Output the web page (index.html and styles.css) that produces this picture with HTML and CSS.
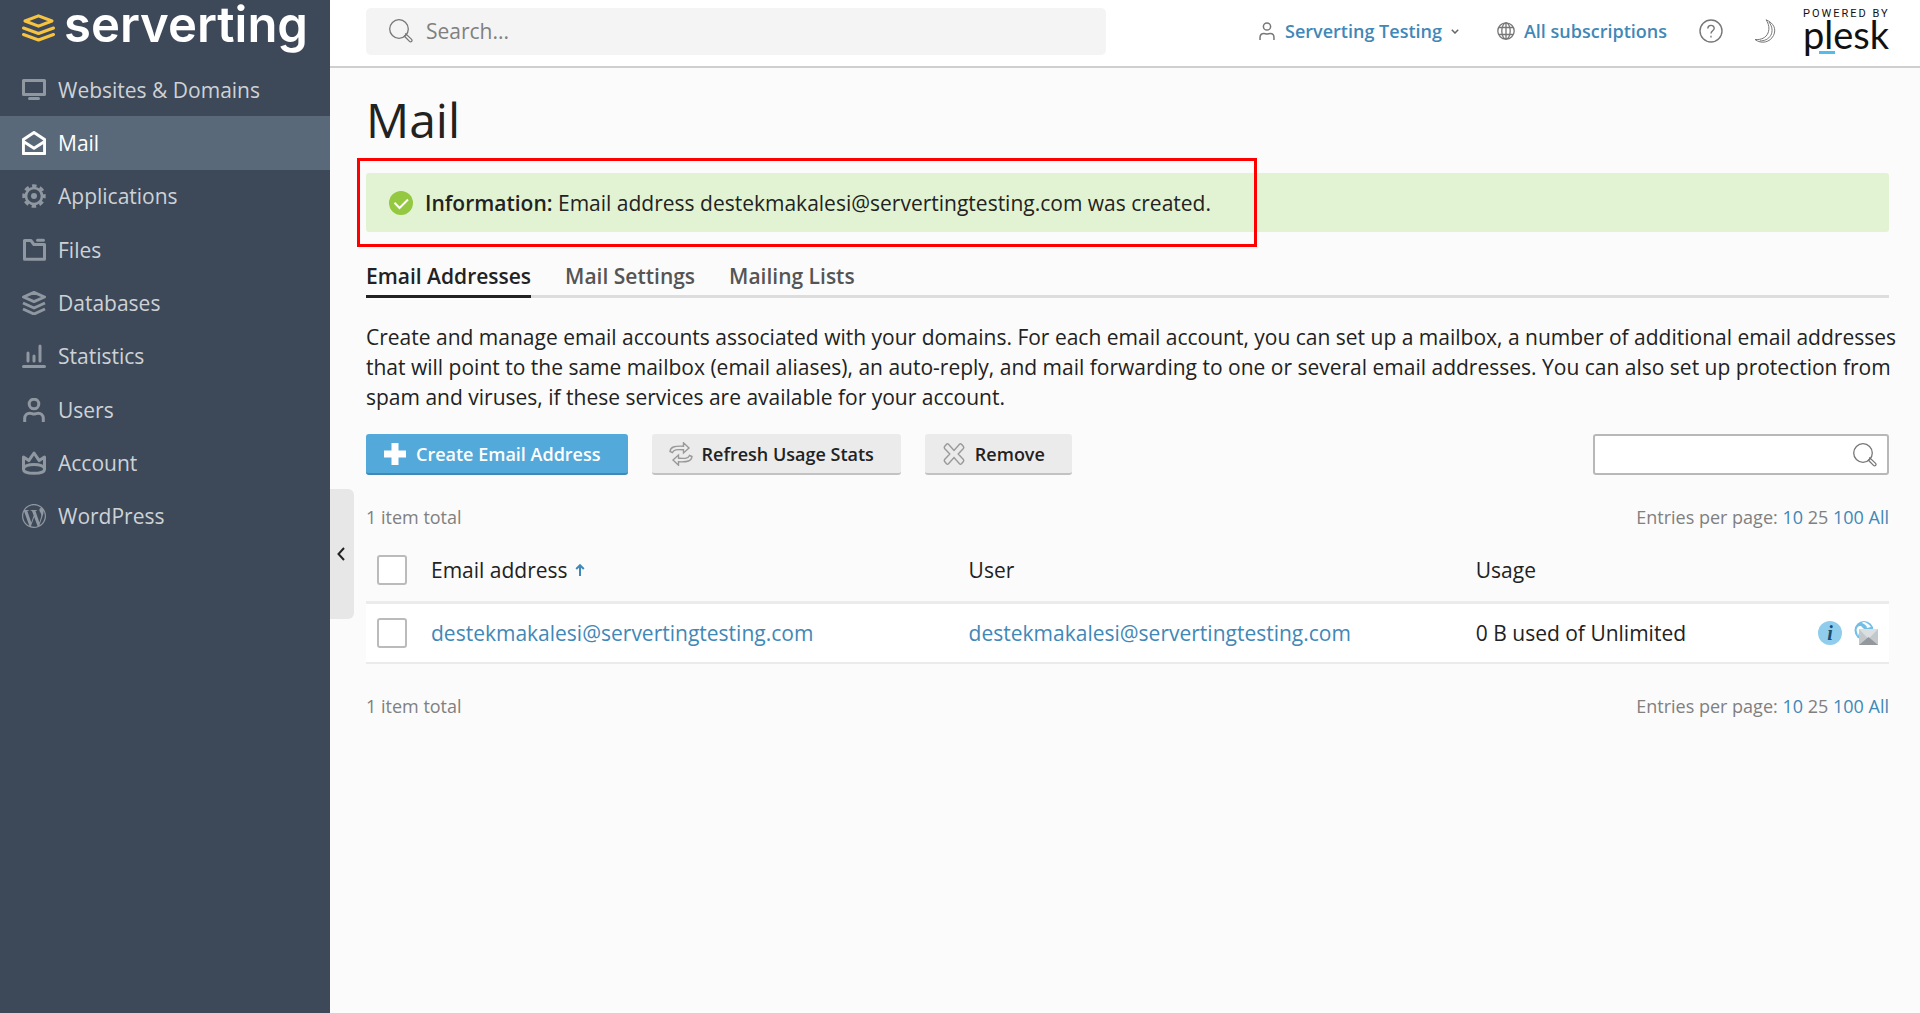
FILE: index.html
```html
<!DOCTYPE html>
<html lang="en">
<head>
<meta charset="utf-8">
<title>Mail</title>
<meta name="viewport" content="width=device-width, initial-scale=1">
<link rel="stylesheet" href="styles.css">
</head>
<body>
<svg class="sprite" aria-hidden="true">
  <symbol id="search" viewBox="0 0 24 24"><circle cx="10" cy="10" r="9.3"/><path d="M15.400 17.200l1.900-1.800 5.300 5a1.400 1.400 0 0 1 0 2 1.400 1.400 0 0 1-2.100 0zM17 15.300l-.8-.7"/></symbol>
  <symbol id="layers" viewBox="0 0 24 24"><path d="M1.500 6L12 1.400 22.500 6 12 10.600zM1 12l11 5 11-5M1 18l11 5 11-5"/></symbol>
  <symbol id="user" viewBox="0 0 24 24"><circle cx="12" cy="6" r="4.800"/><path d="M2.700 24v-3.500c0-3.500 2.400-5.300 5-5.300 1.800 0 2.600.9 4.300.9s2.500-.9 4.300-.9c2.600 0 5 1.800 5 5.300V24"/></symbol>
</svg>
<div class="layout">
  <aside class="sidebar">
    <a class="brand" href="#">
      <svg class="brand-mark" viewBox="0 0 33 28"><path d="M3 7L16.500 1.800 30 7l-13.500 5.200zM1.500 14l15 5.500 15-5.500M1.500 20.500l15 5.500 15-5.500"/></svg>
      <span>serverting</span>
    </a>
    <nav>
      <ul class="menu">
        <li><a href="#"><svg class="icon" viewBox="0 0 24 24"><path d="M1.500 2.500h21v14h-21zM7.500 20.500h9" stroke-linecap="round"/></svg>Websites &amp; Domains</a></li>
        <li><a class="active" href="#" aria-current="page"><svg class="icon" viewBox="0 0 24 24"><path d="M1.400 22.600V8.500L12 1.500l10.600 7v14.100zM1.400 10.500L12 17.200l10.600-6.700"/></svg>Mail</a></li>
        <li><a href="#"><svg class="icon" viewBox="0 0 24 24"><circle cx="12" cy="12" r="8" stroke-width="2.600"/><circle cx="12" cy="12" r="10.200" stroke-width="3" stroke-dasharray="4.500 3.510" stroke-dashoffset="2.250"/><circle class="solid" cx="12" cy="12" r="3"/></svg>Applications</a></li>
        <li><a href="#"><svg class="icon" viewBox="0 0 24 24"><path d="M2.500 2.500h6.400l3 4h10.600v14.800h-20zM15.500 2.200h6" stroke-linecap="round"/></svg>Files</a></li>
        <li><a href="#"><svg class="icon"><use href="#layers"/></svg>Databases</a></li>
        <li><a href="#"><svg class="icon" viewBox="0 0 24 24"><path d="M1.500 22.500h21M6 9v8M12 12v5M18 2v15" stroke-linecap="round"/></svg>Statistics</a></li>
        <li><a href="#"><svg class="icon"><use href="#user"/></svg>Users</a></li>
        <li><a href="#"><svg class="icon" viewBox="0 0 24 24"><path d="M1.500 18.500V6l5.300 3.600L12 2l5.200 7.600L22.500 6v12.500c0 5-21 5-21 0z"/><path d="M1.800 17c2-4.800 18.400-4.800 20.400 0"/></svg>Account</a></li>
        <li><a href="#"><svg class="icon" viewBox="0 0 24 24"><path class="solid" fill-rule="evenodd" d="M21.469 6.825c.84 1.537 1.318 3.300 1.318 5.175 0 3.979-2.156 7.456-5.363 9.325l3.295-9.527c.615-1.540.820-2.771.820-3.864 0-.405-.026-.780-.070-1.110m-7.981.105c.647-.030 1.232-.105 1.232-.105.582-.075.514-.930-.067-.899 0 0-1.755.135-2.880.135-1.064 0-2.850-.150-2.850-.150-.585-.030-.661.855-.075.885 0 0 .540.061 1.125.090l1.680 4.605-2.370 7.080L5.354 6.900c.649-.030 1.234-.100 1.234-.100.585-.075.516-.930-.065-.896 0 0-1.746.138-2.874.138-.200 0-.438-.008-.690-.015C4.911 3.150 8.235 1.215 12 1.215c2.809 0 5.365 1.072 7.286 2.833-.046-.003-.091-.009-.141-.009-1.060 0-1.812.923-1.812 1.914 0 .890.513 1.643 1.060 2.531.411.720.890 1.643.890 2.977 0 .915-.354 1.994-.821 3.479l-1.075 3.585-3.900-11.610.001.014zM12 22.784c-1.059 0-2.081-.153-3.048-.437l3.237-9.406 3.315 9.087c.024.053.050.101.078.149-1.120.393-2.325.609-3.582.609M1.211 12c0-1.564.336-3.050.935-4.390L7.290 21.709C3.694 19.960 1.212 16.271 1.211 12M12 0C5.385 0 0 5.385 0 12s5.385 12 12 12 12-5.385 12-12S18.615 0 12 0"/></svg>WordPress</a></li>
      </ul>
    </nav>
    <button class="collapse" type="button" aria-label="Collapse menu"><svg viewBox="0 0 8 14"><path d="M7 1L1.500 7 7 13"/></svg></button>
  </aside>

  <div class="page">
    <header class="topbar">
      <label class="global-search">
        <svg class="icon"><use href="#search"/></svg>
        <input type="text" placeholder="Search..." aria-label="Search">
      </label>
      <div class="account">
        <a class="account-link user-link" href="#"><svg class="icon-small"><use href="#user"/></svg>Serverting Testing<svg class="chevron" viewBox="0 0 8 5"><path d="M.8.800L4 4 7.200.800"/></svg></a>
        <a class="account-link" href="#"><svg class="icon-small" viewBox="0 0 18 18"><circle cx="9" cy="9" r="8.200"/><ellipse cx="9" cy="9" rx="4.200" ry="8.200"/><path d="M9 .8v16.400M1.800 5.500h14.400M1.800 12.500h14.400"/></svg>All subscriptions</a>
        <button class="tool help" type="button" aria-label="Help"><svg viewBox="0 0 24 24"><circle cx="12" cy="12" r="11"/><path d="M8.800 9.600c0-4.300 6.400-4.100 6.400-.4 0 2.500-3.200 2.600-3.200 5.300M12 16.800v1.600"/></svg></button>
        <button class="tool moon" type="button" aria-label="Dark mode"><svg viewBox="0 0 24 24"><path d="M13 .8c8 3.300 10.500 9.400 7.500 15.700C17 23.400 8.500 25.400 2 20.500c6 .6 11-1.700 13-6.500 1.700-4.300 1-9-2-13.200zM16 3c3.400 4.500 3.900 9.500 1.800 13.300-2.200 3.900-6.500 5.700-11 5.600"/></svg></button>
        <a class="powered" href="#"><span class="powered-by">POWERED BY</span><span class="plesk">plesk</span></a>
      </div>
    </header>

    <main class="content">
      <h1>Mail</h1>
      <div class="notice" role="status">
        <svg class="icon" viewBox="0 0 24 24"><circle cx="12" cy="12" r="12"/><path d="M5.500 11.800l5 5.200 8.500-8.500"/></svg>
        <p><strong>Information:</strong> Email address destekmakalesi@servertingtesting.com was created.</p>
        <div class="highlight"></div>
      </div>
      <nav class="tabs">
        <a class="current" href="#" aria-current="page">Email Addresses</a>
        <a href="#">Mail Settings</a>
        <a href="#">Mailing Lists</a>
      </nav>
      <p class="intro">Create and manage email accounts associated with your domains. For each email account, you can set up a mailbox, a number of additional email addresses that will point to the same mailbox (email aliases), an auto-reply, and mail forwarding to one or several email addresses. You can also set up protection from spam and viruses, if these services are available for your account.</p>
      <div class="toolbar">
        <button class="button primary" type="button"><svg class="icon" viewBox="0 0 24 24"><path d="M8.500 1h7v7.500H23v7h-7.500V23h-7v-7.500H1v-7h7.500z"/></svg>Create Email Address</button>
        <button class="button" type="button"><svg class="icon" viewBox="0 0 24 24"><path d="M1 9.500C1.500 5 5 3.800 14.500 4.200V.8L20 6l-5.500 5V7.800C8 7.500 5 7.200 3.500 10.500zM23 14.500c-.5 4.500-4 5.700-13.500 5.300v3.400L4 18l5.500-5v3.200c6.500.3 9.500.6 11-2.700z"/></svg>Refresh Usage Stats</button>
        <button class="button" type="button"><svg class="icon" viewBox="0 0 24 24"><path d="M2.600 4.500L4.500 2.200q1-1 2 0L12 8.400l5.500-6.200q1-1 2 0l1.900 2.300q.8 1 0 2L16.200 12l5.200 5.500q.8 1 0 2l-1.900 2.300q-1 1-2 0L12 15.600l-5.500 6.200q-1 1-2 0l-1.900-2.300q-.8-1 0-2L7.800 12 2.600 6.500q-.8-1 0-2z"/></svg>Remove</button>
        <label class="filter">
          <input type="text" aria-label="Search email addresses">
          <svg class="icon"><use href="#search"/></svg>
        </label>
      </div>
      <div class="pager">
        <span>1 item total</span>
        <span>Entries per page: <a href="#">10</a> 25 <a href="#">100</a> <a href="#">All</a></span>
      </div>
      <table>
        <colgroup><col class="col-check"><col class="col-email"><col class="col-user"><col><col class="col-actions"></colgroup>
        <thead>
          <tr>
            <th><input type="checkbox" aria-label="Select all"></th>
            <th><a class="sort" href="#">Email address<svg viewBox="0 0 10 12"><path d="M5 12V1.200M1.200 5L5 1.200 8.800 5"/></svg></a></th>
            <th>User</th>
            <th>Usage</th>
            <th></th>
          </tr>
        </thead>
        <tbody>
          <tr>
            <td><input type="checkbox" aria-label="Select destekmakalesi@servertingtesting.com"></td>
            <td><a href="#">destekmakalesi@servertingtesting.com</a></td>
            <td><a href="#">destekmakalesi@servertingtesting.com</a></td>
            <td>0 B used of Unlimited</td>
            <td>
              <div class="actions">
                <a class="info" href="#" aria-label="Settings information">i</a>
                <a class="webmail" href="#" aria-label="Webmail"><svg viewBox="0 0 24 24"><circle cx="10" cy="9.500" r="9.500" fill="#72bfe6"/><path d="M2.500 9c.5-3 2-4.500 4.500-4l3 3-4 1-2 6zM9 1c3 0 6 2 8 5l-4 1c0-2-2-4-5-5z" fill="#fff"/><path d="M5 8h19v16H5z" fill="#c3c8cb"/><path d="M5 8h19l-9.500 10z" fill="#dbdfe1"/><path d="M5 24l9.500-8L24 24z" fill="#92989c"/></svg></a>
              </div>
            </td>
          </tr>
        </tbody>
      </table>
      <div class="pager">
        <span>1 item total</span>
        <span>Entries per page: <a href="#">10</a> 25 <a href="#">100</a> <a href="#">All</a></span>
      </div>
    </main>
  </div>
</div>
</body>
</html>
```
FILE: styles.css
```css
* { box-sizing: border-box; }

body {
  margin: 0;
  background: #fbfbfb;
  color: #222;
  font: 21px/30px "Open Sans", "Noto Sans", sans-serif;
}

a { color: #3f88b7; text-decoration: none; }
p, h1, ul { margin: 0; padding: 0; }
button, input { font: inherit; color: inherit; }
svg { display: block; flex: none; fill: none; stroke: currentColor; }
.sprite { position: absolute; width: 0; height: 0; }
.icon { width: 24px; height: 24px; }

.layout { display: flex; min-height: 100vh; }

/* Sidebar */
.sidebar {
  position: relative;
  flex: none;
  width: 330px;
  background: #3d4959;
}
.brand {
  display: flex;
  align-items: center;
  gap: 9px;
  height: 63px;
  padding: 0 22px 14px;
  color: #fff;
  font: 600 49px/50px Inter, sans-serif;
}
.brand-mark {
  width: 33px;
  height: 28px;
  margin-top: 7px;
  stroke: #f7c442;
  stroke-width: 3;
  stroke-linejoin: round;
  stroke-linecap: round;
}
.menu {
  display: grid;
  grid-auto-rows: 1fr;
  height: 480px;
  list-style: none;
}
.menu a {
  display: flex;
  align-items: center;
  gap: 12px;
  height: 100%;
  padding: 0 22px;
  color: #ced2d6;
}
.menu .icon { stroke-width: 3; stroke-linejoin: round; color: #8f97a1; }
.menu .solid { fill: currentColor; stroke: none; }
.menu .active { background: #596979; color: #fff; }
.menu .active .icon { color: #fff; }
.collapse {
  position: absolute;
  top: 489px;
  left: 100%;
  display: grid;
  place-items: center;
  width: 24px;
  height: 130px;
  padding: 0 3px 0 0;
  border: 0;
  border-radius: 0 6px 6px 0;
  background: #e7e7e7;
}
.collapse svg { width: 8px; height: 14px; stroke-width: 2; }

/* Top bar */
.page { flex: 1; min-width: 0; }
.topbar {
  display: flex;
  align-items: center;
  justify-content: space-between;
  height: 68px;
  padding: 0 31px 4px 36px;
  background: #fff;
  border-bottom: 2px solid #cfcfcf;
}
.global-search {
  display: flex;
  align-items: center;
  gap: 13px;
  width: 740px;
  height: 47px;
  padding: 0 23px;
  border-radius: 5px;
  background: #f4f4f4;
  color: #777;
}
.global-search input {
  flex: 1;
  min-width: 0;
  padding: 0;
  border: 0;
  outline: 0;
  background: none;
}
.global-search input::placeholder { color: #808080; opacity: 1; }
.account { display: flex; align-items: center; font-size: 18px; font-weight: 600; }
.account-link { display: flex; align-items: center; gap: 9px; margin-right: 32px; }
.user-link { margin-right: 38px; }
.icon-small { width: 18px; height: 18px; color: #777; stroke-width: 1.300; }
.user-link .icon-small { stroke-width: 2; }
.chevron { width: 8px; height: 5px; color: #666; stroke-width: 1.500; }
.tool { padding: 0; border: 0; background: none; color: #777; }
.tool svg { width: 24px; height: 24px; stroke-width: 1.400; }
.help { margin-right: 30px; }
.moon { margin-right: 26px; }
.moon svg { stroke-width: 1; }
.powered {
  display: flex;
  flex-direction: column;
  width: 86px;
  color: #111;
}
.powered-by { font: 11px/12px Roboto, sans-serif; letter-spacing: 2px; white-space: nowrap; }
.plesk { position: relative; padding-bottom: 6px; font: 38px/28px Lato, sans-serif; }
.plesk::after {
  content: "";
  position: absolute;
  left: 16px;
  bottom: 0;
  width: 16px;
  height: 3px;
  background: #53bce9;
}

/* Content */
.content { padding: 18px 31px 36px 36px; }
h1 { margin-bottom: 19px; font-size: 48px; font-weight: 400; line-height: 68px; }
.notice {
  position: relative;
  display: flex;
  align-items: center;
  gap: 12px;
  min-height: 59px;
  padding: 14px 23px;
  border-radius: 3px;
  background: #e2f3d3;
}
.notice .icon { stroke: #fff; stroke-width: 2; }
.notice circle { fill: #93c840; stroke: none; }
.notice strong { font-weight: 600; }
.highlight {
  position: absolute;
  inset: -15px auto -15px -9px;
  width: 900px;
  border: 3px solid #f00;
}
.tabs {
  display: flex;
  gap: 34px;
  margin-top: 29px;
  border-bottom: 3px solid #ddd;
  font-weight: 600;
}
.tabs a {
  margin-bottom: -3px;
  padding-bottom: 4px;
  border-bottom: 3px solid transparent;
  color: #555;
}
.tabs .current { border-color: #222; color: #222; }
.intro { margin: 24px -12px 22px 0; }

.toolbar { display: flex; gap: 24px; }
.button {
  display: flex;
  align-items: center;
  gap: 9px;
  height: 41px;
  padding: 0 27px 0 17px;
  border: 0;
  border-bottom: 2px solid #c2c2c2;
  border-radius: 3px;
  background: #ebebeb;
  font-size: 18px;
  font-weight: 600;
}
.button .icon { color: #999; stroke-width: 1.400; }
.primary { border-color: #4089b5; background: #53a9da; color: #fff; }
.primary .icon { fill: #fff; stroke: none; }
.filter {
  display: flex;
  align-items: center;
  width: 296px;
  height: 41px;
  margin-left: auto;
  padding: 0 10px;
  border: 2px solid #b8b8b8;
  border-radius: 3px;
  background: #fff;
  color: #777;
}
.filter input { flex: 1; min-width: 0; border: 0; outline: 0; background: none; }
.filter .icon, .global-search .icon { stroke-width: 1.300; }

.pager {
  display: flex;
  justify-content: space-between;
  margin: 27px 0 7px;
  color: #808080;
  font-size: 18px;
}

/* Mailbox list */
table { width: 100%; table-layout: fixed; border-collapse: collapse; }
.col-check { width: 54px; }
.col-email { width: 35.3%; }
.col-user { width: 33.3%; }
.col-actions { width: 90px; }
th, td { height: 61px; padding: 0 11px; text-align: left; font-weight: 400; white-space: nowrap; }
th { height: 63px; border-bottom: 3px solid #ebebeb; }
td { border-bottom: 2px solid #ebebeb; background: #fff; }
input[type="checkbox"] {
  appearance: none;
  display: block;
  width: 30px;
  height: 30px;
  margin: 0;
  border: 2px solid #bbb;
  border-radius: 3px;
  background: #fff;
}
.sort { display: inline-flex; align-items: center; gap: 7px; color: inherit; }
.sort svg { width: 10px; height: 12px; color: #3f88b7; stroke-width: 2; }
.actions { display: flex; justify-content: flex-end; gap: 12px; }
.info {
  width: 24px;
  height: 24px;
  border-radius: 50%;
  background: #90cdec;
  color: #174f73;
  font: italic 700 20px/24px "Liberation Serif", serif;
  text-align: center;
}
.webmail svg { width: 24px; height: 24px; stroke: none; }
```
